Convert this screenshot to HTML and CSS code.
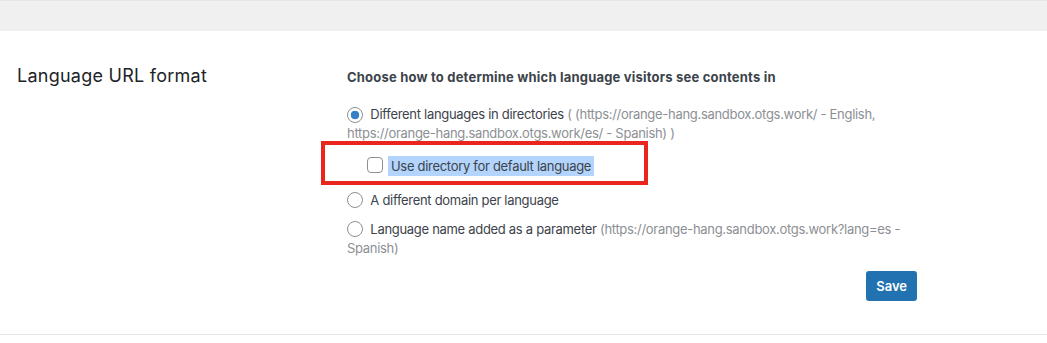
FILE: index.html
```html
<!DOCTYPE html>
<html lang="en">
  <head>
    <meta charset="UTF-8" />
    <meta name="viewport" content="width=device-width, initial-scale=1.0" />
    <title>Language URL format</title>
    <link rel="stylesheet" href="styles.css">
  </head>
  <body>
    <div class="topbar"></div>

    <div class="section">
      <h2 class="section-title">Language URL format</h2>

      <div class="section-body">
        <p class="lead">Choose how to determine which language visitors see contents in</p>

        <label class="option">
          <span class="radio checked"></span>
          Different languages in directories <span class="muted">( (https://orange-hang.sandbox.otgs.work/ - English, https://orange-hang.sandbox.otgs.work/es/ - Spanish) )</span>
        </label>

        <div class="highlight-box">
          <label class="sub-option">
            <span class="checkbox"></span>
            <span class="selected-text">Use directory for default language</span>
          </label>
        </div>

        <label class="option">
          <span class="radio"></span>
          A different domain per language
        </label>

        <label class="option">
          <span class="radio"></span>
          Language name added as a parameter <span class="muted">(https://orange-hang.sandbox.otgs.work?lang=es - Spanish)</span>
        </label>

        <div class="actions">
          <button class="save-btn">Save</button>
        </div>
      </div>
    </div>
  </body>
</html>
```

FILE: styles.css
```css
* {
  margin: 0;
  padding: 0;
  box-sizing: border-box;
  font-family: Inter, 'Liberation Sans', Arial, sans-serif;
}

body {
  background: white;
  color: #3c434a;
  font-size: 13px;
  letter-spacing: -0.3px;
}

.topbar {
  height: 31px;
  background: #f0f0f1;
  border-top: 1px solid #e6e6e7;
}

.section {
  display: flex;
  padding: 33px 0 33px 17px;
  border-bottom: 1px solid #e8e8e8;
}

.section-title {
  width: 330px;
  flex-shrink: 0;
  font-size: 18px;
  line-height: 24px;
  font-weight: 400;
  letter-spacing: 0.25px;
  color: #1d2327;
}

.section-body {
  width: 570px;
  padding-top: 4px;
}

.lead {
  font-weight: 700;
  letter-spacing: 0.2px;
  line-height: 19px;
  margin-bottom: 18px;
}

.option {
  display: block;
  line-height: 19px;
  margin-bottom: 10px;
}

.muted {
  color: #8c8f94;
}

.radio {
  display: inline-block;
  width: 16px;
  height: 16px;
  margin: 1.5px 4px 0 0;
  vertical-align: top;
  border: 1px solid #8c8f94;
  border-radius: 50%;
  background: white;
}

.radio.checked {
  background: radial-gradient(circle, #3582c4 4px, white 4.6px);
}

.highlight-box {
  width: 327px;
  margin: -12px 0 5.5px -26px;
  padding: 11px 0 5px 42px;
  border: 4px solid #e8261d;
}

.sub-option {
  display: flex;
  align-items: center;
  gap: 5px;
}

.checkbox {
  width: 16px;
  height: 16px;
  margin-top: -2px;
  border: 1px solid #8c8f94;
  border-radius: 4px;
  background: white;
  flex-shrink: 0;
}

.selected-text {
  background: #b3d4fc;
  padding: 0 3px;
  line-height: 20px;
  color: #3c434a;
}

.actions {
  display: flex;
  justify-content: flex-end;
  margin-top: 13.5px;
}

.save-btn {
  height: 30px;
  padding: 0 10px;
  border: none;
  border-radius: 3px;
  background: #2271b1;
  color: white;
  font-size: 13px;
  font-weight: 600;
  letter-spacing: 0;
}
```
